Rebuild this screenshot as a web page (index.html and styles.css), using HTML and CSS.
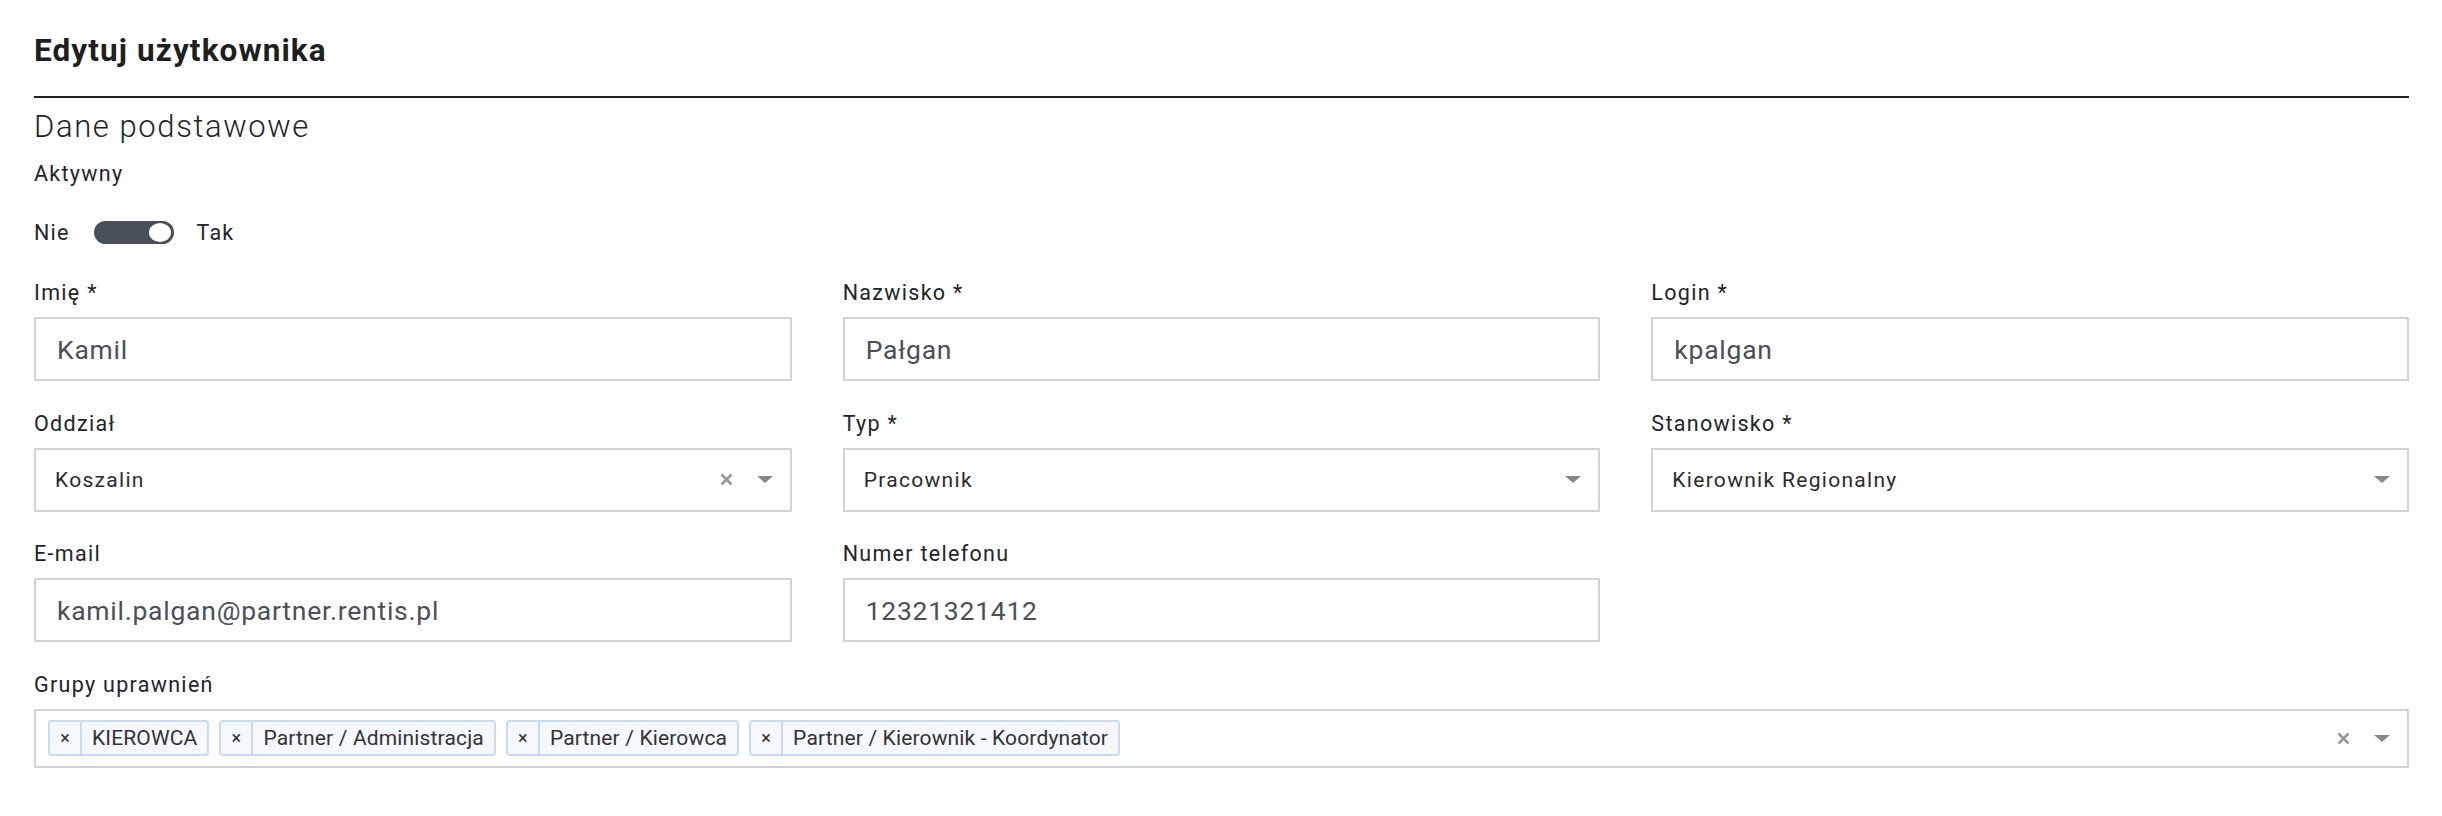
FILE: index.html
```html
<!DOCTYPE html>
<html lang="pl">
<head>
<meta charset="utf-8">
<title>Edytuj użytkownika</title>
<link rel="stylesheet" href="styles.css">
</head>
<body>
<div class="page">
  <h4 class="title">Edytuj użytkownika</h4>
  <hr class="rule">
  <h5 class="section">Dane podstawowe</h5>
  <div class="label">Aktywny</div>
  <div class="switch-row">
    <span>Nie</span>
    <span class="switch"><span class="knob"></span></span>
    <span>Tak</span>
  </div>

  <div class="grid">
    <div class="field">
      <label class="label">Imię *</label>
      <div class="input">Kamil</div>
    </div>
    <div class="field">
      <label class="label">Nazwisko *</label>
      <div class="input">Pałgan</div>
    </div>
    <div class="field">
      <label class="label">Login *</label>
      <div class="input">kpalgan</div>
    </div>

    <div class="field">
      <label class="label">Oddział</label>
      <div class="select">
        <span class="sel-text">Koszalin</span>
        <svg class="clear" width="13" height="13" viewBox="0 0 13 13"><path d="M1.5 1.5L11.5 11.5M11.5 1.5L1.5 11.5" stroke="#999" stroke-width="2.6" stroke-linecap="butt"/></svg>
        <span class="arrow"></span>
      </div>
    </div>
    <div class="field">
      <label class="label">Typ *</label>
      <div class="select">
        <span class="sel-text">Pracownik</span>
        <span class="arrow"></span>
      </div>
    </div>
    <div class="field">
      <label class="label">Stanowisko *</label>
      <div class="select">
        <span class="sel-text">Kierownik Regionalny</span>
        <span class="arrow"></span>
      </div>
    </div>

    <div class="field">
      <label class="label">E-mail</label>
      <div class="input">kamil.palgan@partner.rentis.pl</div>
    </div>
    <div class="field">
      <label class="label">Numer telefonu</label>
      <div class="input">12321321412</div>
    </div>
    <div class="field"></div>

    <div class="field wide">
      <label class="label">Grupy uprawnień</label>
      <div class="multi">
        <div class="tags">
          <span class="tag"><span class="tag-x">×</span><span class="tag-text">KIEROWCA</span></span>
          <span class="tag"><span class="tag-x">×</span><span class="tag-text">Partner / Administracja</span></span>
          <span class="tag"><span class="tag-x">×</span><span class="tag-text">Partner / Kierowca</span></span>
          <span class="tag"><span class="tag-x">×</span><span class="tag-text">Partner / Kierownik - Koordynator</span></span>
        </div>
        <svg class="clear" width="13" height="13" viewBox="0 0 13 13"><path d="M1.5 1.5L11.5 11.5M11.5 1.5L1.5 11.5" stroke="#999" stroke-width="2.6" stroke-linecap="butt"/></svg>
        <span class="arrow"></span>
      </div>
    </div>
  </div>
</div>
</body>
</html>
```

FILE: styles.css
```css
* { box-sizing: border-box; }
html, body { margin: 0; padding: 0; background: #fff; }
body {
  font-family: Roboto, "Liberation Sans", Arial, sans-serif;
  font-size: 21.5px;
  color: #212529;
}
.page {
  padding: 32px 33px 0 34px;
  display: flex;
  flex-direction: column;
}
.title {
  margin: 0;
  font-size: 31.5px;
  line-height: 38px;
  font-weight: 700;
  letter-spacing: 1.1px;
  color: #1d1f21;
}
.rule {
  margin: 26px 0 0 0;
  border: 0;
  height: 2px;
  background: #212121;
}
.section {
  margin: 12px 0 0 0;
  font-size: 31px;
  line-height: 34px;
  font-weight: 300;
  letter-spacing: 1.6px;
  color: #212529;
}
.label {
  display: block;
  font-size: 21.5px;
  line-height: 31px;
  letter-spacing: 1.3px;
  color: #212529;
}
.page > .label { margin-top: 14px; }
.switch-row {
  margin-top: 28px;
  display: flex;
  align-items: center;
  height: 31px;
  line-height: 31px;
  letter-spacing: 1.2px;
}
.switch {
  position: relative;
  width: 80px;
  height: 23px;
  margin: 0 23px 0 24px;
  border-radius: 12px;
  background: #495057;
}
.knob {
  position: absolute;
  right: 3px;
  top: 2px;
  width: 22px;
  height: 19px;
  border-radius: 50%;
  background: #fff;
}
.grid {
  margin-top: 29px;
  display: grid;
  grid-template-columns: repeat(3, 1fr);
  column-gap: 51px;
}
.field { margin-bottom: 26.5px; }
.field .label { margin-bottom: 9px; }
.wide { grid-column: 1 / -1; }
.input {
  height: 64px;
  border: 2px solid #ced4da;
  padding: 0 21px;
  display: flex;
  align-items: center;
  font-size: 26.5px;
  letter-spacing: 0.75px;
  color: #495057;
}
.select {
  height: 64px;
  border: 2px solid #ced4da;
  padding: 0 17px 0 19px;
  display: flex;
  align-items: center;
  font-size: 21px;
  letter-spacing: 1.3px;
  color: #2b2b2b;
}
.sel-text { flex: 1; }
.clear { margin-right: 24px; flex: none; }
.arrow {
  flex: none;
  width: 0;
  height: 0;
  border-left: 8px solid transparent;
  border-right: 8px solid transparent;
  border-top: 7px solid #888;
}
.multi {
  height: 59px;
  border: 2px solid #ced4da;
  padding: 0 17px 0 12px;
  display: flex;
  align-items: center;
}
.tags {
  flex: 1;
  display: flex;
  gap: 10px;
}
.tag {
  display: inline-flex;
  height: 36px;
  border: 2px solid #c7dbf7;
  border-radius: 4px;
  background: #f5f8fd;
  color: #333;
  font-size: 21px;
  line-height: 32px;
  letter-spacing: 0.15px;
}
.tag-x {
  width: 32px;
  text-align: center;
  border-right: 2px solid #c7dbf7;
  font-size: 18px;
  letter-spacing: 0;
  color: #333;
}
.tag-text { padding: 0 10px 0 10px; }
```
